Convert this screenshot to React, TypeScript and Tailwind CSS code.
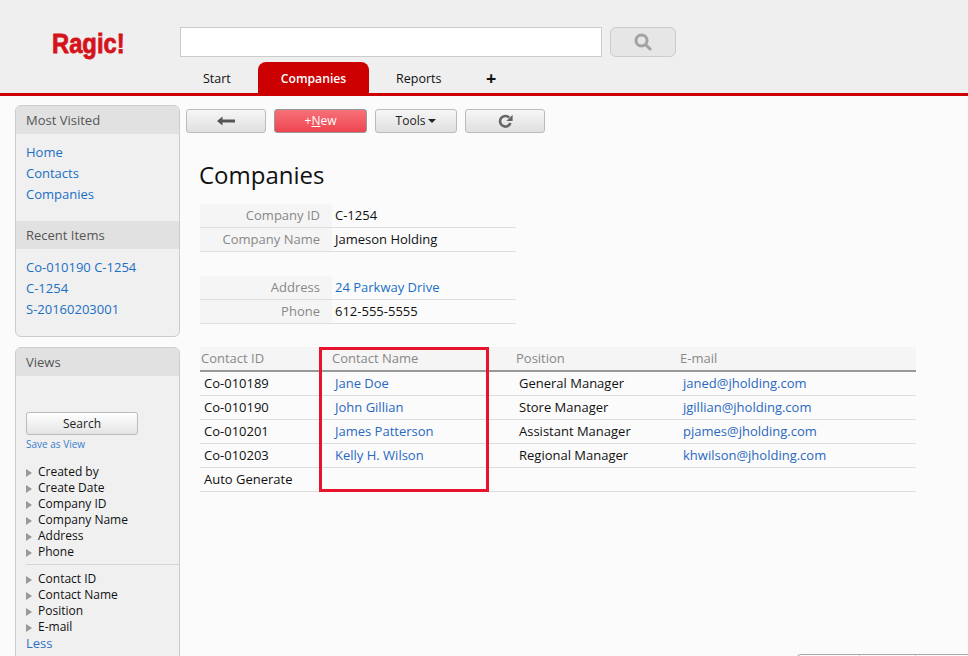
const font = { sans: "font-['Open_Sans',sans-serif]" };

const contacts = [
  { id: 'Co-010189', name: 'Jane Doe', position: 'General Manager', email: 'janed@jholding.com' },
  { id: 'Co-010190', name: 'John Gillian', position: 'Store Manager', email: 'jgillian@jholding.com' },
  { id: 'Co-010201', name: 'James Patterson', position: 'Assistant Manager', email: 'pjames@jholding.com' },
  { id: 'Co-010203', name: 'Kelly H. Wilson', position: 'Regional Manager', email: 'khwilson@jholding.com' },
  { id: 'Auto Generate', name: '', position: '', email: '' },
];

function PanelHeader({ title }: { title: string }) {
  return <div className="h-[28px] bg-[#e1e1e1] pl-[10px] text-[13px] leading-[28px] text-[#555]">{title}</div>;
}

function LinkList({ items }: { items: string[] }) {
  return (
    <div className="flex flex-col pl-[10px]">
      {items.map((item) => (
        <a key={item} className="h-[21px] text-[13px] leading-[21px] text-[#1a6fc4]">
          {item}
        </a>
      ))}
    </div>
  );
}

function FilterRow({ label }: { label: string }) {
  return (
    <div className="flex h-[16px] items-center text-[12px] text-[#111]">
      <span className="mr-[6px] h-0 w-0 translate-y-px border-y-[4px] border-l-[6px] border-y-transparent border-l-[#999]" />
      {label}
    </div>
  );
}

function Sidebar() {
  return (
    <div className="flex w-[165px] shrink-0 flex-col gap-[10px]">
      <div className="h-[232px] overflow-hidden rounded-md border border-[#ccc] bg-[#f0f0f0]">
        <PanelHeader title="Most Visited" />
        <div className="h-[87px] pt-[8px]">
          <LinkList items={['Home', 'Contacts', 'Companies']} />
        </div>
        <PanelHeader title="Recent Items" />
        <div className="pt-[8px]">
          <LinkList items={['Co-010190 C-1254', 'C-1254', 'S-20160203001']} />
        </div>
      </div>
      <div className="h-[340px] overflow-hidden rounded-md border border-[#ccc] bg-[#f0f0f0]">
        <PanelHeader title="Views" />
        <div className="pl-[10px] pt-[36px]">
          <button className="block h-[23px] w-[112px] rounded-[3px] border border-[#bbb] bg-gradient-to-b from-white to-[#e4e4e4] text-[12px] text-[#222]">
            Search
          </button>
          <div className="text-[10px] leading-[18px] text-[#3b7dd0]">Save as View</div>
          <div className="mt-[11px]">
            {['Created by', 'Create Date', 'Company ID', 'Company Name', 'Address', 'Phone'].map((label) => (
              <FilterRow key={label} label={label} />
            ))}
          </div>
          <div className="mb-[6px] mt-[4px] border-t border-[#d5d5d5]" />
          {['Contact ID', 'Contact Name', 'Position', 'E-mail'].map((label) => (
            <FilterRow key={label} label={label} />
          ))}
          <div className="text-[13px] leading-[17px] text-[#2f6fc4]">Less</div>
        </div>
      </div>
    </div>
  );
}

function ToolButton({ className, children }: { className: string; children: React.ReactNode }) {
  return (
    <button
      className={`flex h-[24px] items-center justify-center rounded-[3px] border border-[#bbb] bg-gradient-to-b from-[#f6f6f6] to-[#e0e0e0] text-[12px] text-[#222] ${className}`}
    >
      {children}
    </button>
  );
}

function FormRow({ label, value, link }: { label: string; value: string; link?: boolean }) {
  return (
    <div className="flex h-[24px] border-b border-[#ddd]">
      <div className="w-[132px] bg-[#f5f5f5] pr-[12px] text-right text-[13px] leading-[23px] text-[#888]">{label}</div>
      <div className={`pl-[3px] text-[13px] leading-[23px] ${link ? 'text-[#1a6fc4]' : 'text-[#111]'}`}>{value}</div>
    </div>
  );
}

export default function App() {
  return (
    <div className={`relative h-[656px] w-[968px] overflow-hidden bg-[#fbfbfb] ${font.sans}`}>
      <header className="flex h-[96px] border-b-[3px] border-[#cc0000] bg-[#efefef]">
        <div className="w-[180px] shrink-0 pl-[52px] pt-[26px]">
          <div className="w-[72px] origin-left scale-x-[0.88] whitespace-nowrap font-['Liberation_Sans',sans-serif] text-[27px] font-bold leading-[36px] text-[#d4141a] [-webkit-text-stroke:0.8px_#d4141a]">
            Ragic!
          </div>
        </div>
        <div className="flex flex-col pt-[27px]">
          <div className="flex gap-[8px]">
            <div className="h-[30px] w-[422px] border border-[#ccc] bg-white" />
            <div className="flex h-[30px] w-[66px] items-center justify-center rounded-md border border-[#ccc] bg-[#e6e6e6]">
              <svg width="18" height="18" viewBox="0 0 18 18" fill="none" stroke="#a3a3a3" strokeWidth="3">
                <circle cx="7.5" cy="7.5" r="5.5" />
                <path d="M11.5 11.5 16 16" strokeLinecap="round" />
              </svg>
            </div>
          </div>
          <nav className="mt-[5px] flex h-[31px] text-[12.5px] text-[#111]">
            <div className="w-[78px] pl-[23px] leading-[33px]">Start</div>
            <div className="w-[111px] rounded-t-lg bg-[#cc0000] text-center text-[12.2px] font-semibold leading-[33px] text-white">
              Companies
            </div>
            <div className="w-[100px] pl-[27px] leading-[33px]">Reports</div>
            <div className="pl-[17px] text-[18px] font-bold leading-[33px]">+</div>
          </nav>
        </div>
      </header>

      <div className="flex gap-[6px] pl-[15px] pt-[9px]">
        <Sidebar />
        <main className="flex-1 pt-[4px]">
          <div className="flex gap-[8px]">
            <ToolButton className="w-[80px]">
              <svg width="18" height="10" viewBox="0 0 18 10" fill="#555">
                <path d="M0 5 5.5 0.5V3.5H18V6.5H5.5V9.5Z" />
              </svg>
            </ToolButton>
            <button className="h-[24px] w-[93px] rounded-[3px] border border-[#999] bg-gradient-to-b from-[#f67078] to-[#ee4450] text-[12px] text-white">
              +<span className="underline">N</span>ew
            </button>
            <ToolButton className="w-[82px] gap-[3px]">
              Tools
              <span className="h-0 w-0 border-x-[4px] border-t-[4px] border-x-transparent border-t-[#222]" />
            </ToolButton>
            <ToolButton className="w-[80px]">
              <svg width="15" height="15" viewBox="0 0 15 15" fill="none">
                <path d="M11.2 3.6A5.3 5.3 0 1 0 12.4 9" stroke="#666" strokeWidth="2.6" />
                <path d="M14.6 0.8V7H8.4Z" fill="#666" />
              </svg>
            </ToolButton>
          </div>

          <div className="pl-[14px]">
            <h1 className="-ml-px mt-[25px] h-[34px] text-[24px] leading-[34px] text-[#111]">Companies</h1>
            <div className="mt-[12px] w-[316px]">
              <FormRow label="Company ID" value="C-1254" />
              <FormRow label="Company Name" value="Jameson Holding" />
              <div className="h-[24px]" />
              <FormRow label="Address" value="24 Parkway Drive" link />
              <FormRow label="Phone" value="612-555-5555" />
            </div>

            <div className="mt-[23px] w-[716px]">
              <div className="grid h-[25px] grid-cols-[131px_184px_164px_1fr] border-b-2 border-[#999] bg-[#f5f5f5] text-[13px] leading-[23px] text-[#888]">
                <div className="pl-px">Contact ID</div>
                <div className="pl-px">Contact Name</div>
                <div className="pl-px">Position</div>
                <div className="pl-px">E-mail</div>
              </div>
              {contacts.map((c) => (
                <div
                  key={c.id}
                  className="grid h-[24px] grid-cols-[131px_184px_164px_1fr] border-b border-[#ddd] text-[13px] leading-[23px] text-[#111]"
                >
                  <div className="pl-[4px]">{c.id}</div>
                  <div className="pl-[4px] text-[#2a68c0]">{c.name}</div>
                  <div className="pl-[4px]">{c.position}</div>
                  <div className="pl-[4px] text-[#2a68c0]">{c.email}</div>
                </div>
              ))}
            </div>
          </div>
        </main>
      </div>

      {/* red highlight drawn over the table */}
      <div className="absolute left-[319px] top-[347px] h-[145px] w-[170px] border-[3px] border-[#e8142e]" />

      {/* edge of a floating bar peeking in at the bottom */}
      <div className="absolute left-[797px] top-[654px] flex h-[4px] w-[171px] rounded-tl-sm border-l border-t border-[#aaa]">
        <div className="w-[62px] border-r border-[#ccc]" />
        <div className="w-[56px] border-r border-[#ccc]" />
      </div>
    </div>
  );
}
